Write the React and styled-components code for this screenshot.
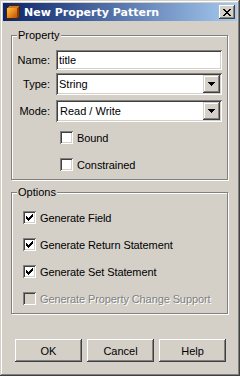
import React from "react";
import styled, { createGlobalStyle } from "styled-components";

const FACE = "#D4D0C8";
const SHADOW = "#808080";
const DARK = "#404040";

const GlobalStyle = createGlobalStyle`
  html, body { margin: 0; padding: 0; background: ${FACE}; }
  body {
    font-family: "Liberation Sans", Arial, sans-serif;
    font-size: 11px;
    color: #000;
  }
  * { box-sizing: border-box; }
`;

const Window = styled.div`
  width: 240px;
  height: 376px;
  padding: 3px;
  background: ${FACE};
  display: flex;
  flex-direction: column;
  box-shadow: inset -1px -1px ${DARK}, inset 1px 1px ${FACE},
    inset -2px -2px ${SHADOW}, inset 2px 2px #fff;
`;

const TitleBar = styled.div`
  height: 18px;
  flex: none;
  display: flex;
  align-items: center;
  padding: 0 2px 0 2px;
  gap: 3px;
  background: linear-gradient(to right, #0a246a, #a6caf0);
`;

const TitleText = styled.span`
  flex: 1;
  color: #fff;
  font-family: "DejaVu Sans", Verdana, sans-serif;
  font-weight: bold;
  font-size: 11px;
  white-space: nowrap;
`;

const CloseButton = styled.div`
  width: 16px;
  height: 14px;
  display: flex;
  align-items: center;
  justify-content: center;
  background: ${FACE};
  box-shadow: inset -1px -1px ${DARK}, inset 1px 1px #fff,
    inset -2px -2px ${SHADOW}, inset 2px 2px ${FACE};
`;

const Client = styled.div`
  flex: 1;
  display: flex;
  flex-direction: column;
  padding: 14px 9px 0 8px;
`;

const Group = styled.div`
  position: relative;
  border: 1px solid ${SHADOW};
  box-shadow: 1px 1px 0 0 #fff, inset 1px 1px 0 0 #fff;
  padding: ${(p) => p.$pad};
  margin-top: ${(p) => p.$mt || 0}px;
  display: flex;
  flex-direction: column;
`;

const Legend = styled.span`
  position: absolute;
  top: -7px;
  left: 5px;
  padding: 0 1px;
  background: ${FACE};
  line-height: 13px;
`;

const FieldRow = styled.div`
  display: grid;
  grid-template-columns: 38px 166px;
  column-gap: 6px;
  align-items: center;
  margin-top: ${(p) => p.$mt || 0}px;
`;

const Label = styled.span`
  text-align: right;
  white-space: nowrap;
`;

const Sunken = styled.div`
  position: relative;
  height: ${(p) => p.$h}px;
  background: #fff;
  display: flex;
  align-items: center;
  padding-left: ${(p) => p.$pl || 3}px;
  box-shadow: inset 1px 1px ${SHADOW}, inset -1px -1px #fff,
    inset 2px 2px ${DARK}, inset -2px -2px ${FACE};
`;

const DropButton = styled.div`
  position: absolute;
  right: 2px;
  top: 2px;
  width: 17px;
  height: 18px;
  background: ${FACE};
  display: flex;
  align-items: center;
  justify-content: center;
  box-shadow: inset -1px -1px ${DARK}, inset 1px 1px ${FACE},
    inset -2px -2px ${SHADOW}, inset 2px 2px #fff;
`;

const CheckList = styled.div`
  display: flex;
  flex-direction: column;
  gap: 14px;
  margin-top: ${(p) => p.$mt || 0}px;
  padding-left: ${(p) => p.$indent}px;
`;

const CheckRow = styled.div`
  display: flex;
  align-items: center;
  gap: 4px;
  height: 13px;
  white-space: nowrap;
  letter-spacing: -0.1px;
  color: ${(p) => (p.$disabled ? SHADOW : "#000")};
  text-shadow: ${(p) => (p.$disabled ? "1px 1px 0 #fff" : "none")};
`;

const Box = styled.span`
  width: 13px;
  height: 13px;
  flex: none;
  display: flex;
  align-items: center;
  justify-content: center;
  background: ${(p) => (p.$disabled ? FACE : "#fff")};
  box-shadow: inset 1px 1px ${SHADOW}, inset -1px -1px #fff,
    inset 2px 2px ${DARK}, inset -2px -2px ${FACE};
`;

const ButtonRow = styled.div`
  display: flex;
  gap: 5px;
  margin-top: 25px;
  padding-left: 4px;
`;

const Button = styled.div`
  width: 67px;
  height: 23px;
  display: flex;
  align-items: center;
  justify-content: center;
  background: ${FACE};
  box-shadow: inset -1px -1px ${DARK}, inset 1px 1px #fff,
    inset -2px -2px ${SHADOW}, inset 2px 2px ${FACE};
`;

const AppIcon = () => (
  <svg width="16" height="16" viewBox="0 0 16 16" shapeRendering="crispEdges">
    <defs>
      <linearGradient id="cube" x1="0" y1="0" x2="1" y2="1">
        <stop offset="0" stopColor="#f9c24a" />
        <stop offset="0.5" stopColor="#e88a1c" />
        <stop offset="1" stopColor="#b4500c" />
      </linearGradient>
    </defs>
    <polygon points="1,4 4,1 15,1 15,12 12,15 1,15" fill="#4a2408" />
    <polygon points="2,4 4,2 14,2 12,4" fill="#c97a2a" />
    <polygon points="12,4 14,2 14,12 12,14" fill="#8a3e0a" />
    <rect x="2" y="4" width="10" height="10" fill="url(#cube)" />
  </svg>
);

const CloseGlyph = () => (
  <svg width="8" height="7" viewBox="0 0 8 7" shapeRendering="crispEdges">
    <path
      d="M0 0h2v1H0z M6 0h2v1H6z M1 1h2v1H1z M5 1h2v1H5z M2 2h4v1H2z M3 3h2v1H3z M2 4h4v1H2z M1 5h2v1H1z M5 5h2v1H5z M0 6h2v1H0z M6 6h2v1H6z"
      fill="#000"
    />
  </svg>
);

const Arrow = () => (
  <svg width="7" height="4" viewBox="0 0 7 4" shapeRendering="crispEdges">
    <path d="M0 0h7v1H0z M1 1h5v1H1z M2 2h3v1H2z M3 3h1v1H3z" fill="#000" />
  </svg>
);

const Check = () => (
  <svg width="7" height="7" viewBox="0 0 7 7" shapeRendering="crispEdges">
    <path
      d="M0 2h1v3H0z M1 3h1v3H1z M2 4h1v3H2z M3 3h1v3H3z M4 2h1v3H4z M5 1h1v3H5z M6 0h1v3H6z"
      fill="#000"
    />
  </svg>
);

const CheckBox = ({ checked, disabled, children }) => (
  <CheckRow $disabled={disabled}>
    <Box $disabled={disabled}>{checked && <Check />}</Box>
    <span>{children}</span>
  </CheckRow>
);

export default function App() {
  return (
    <>
      <GlobalStyle />
      <Window>
        <TitleBar>
          <AppIcon />
          <TitleText>New Property Pattern</TitleText>
          <CloseButton>
            <CloseGlyph />
          </CloseButton>
        </TitleBar>
        <Client>
          <Group $pad="14px 5px 8px 0">
            <Legend>Property</Legend>
            <FieldRow>
              <Label>Name:</Label>
              <Sunken $h={20}>title</Sunken>
            </FieldRow>
            <FieldRow $mt={3}>
              <Label>Type:</Label>
              <Sunken $h={22}>
                String
                <DropButton>
                  <Arrow />
                </DropButton>
              </Sunken>
            </FieldRow>
            <FieldRow $mt={5}>
              <Label>Mode:</Label>
              <Sunken $h={22} $pl={4}>
                Read / Write
                <DropButton>
                  <Arrow />
                </DropButton>
              </Sunken>
            </FieldRow>
            <CheckList $mt={9} $indent={48}>
              <CheckBox>Bound</CheckBox>
              <CheckBox>Constrained</CheckBox>
            </CheckList>
          </Group>
          <Group $pad="18px 5px 8px 0" $mt={12}>
            <Legend>Options</Legend>
            <CheckList $indent={11}>
              <CheckBox checked>Generate Field</CheckBox>
              <CheckBox checked>Generate Return Statement</CheckBox>
              <CheckBox checked>Generate Set Statement</CheckBox>
              <CheckBox disabled>Generate Property Change Support</CheckBox>
            </CheckList>
          </Group>
          <ButtonRow>
            <Button>OK</Button>
            <Button>Cancel</Button>
            <Button>Help</Button>
          </ButtonRow>
        </Client>
      </Window>
    </>
  );
}
